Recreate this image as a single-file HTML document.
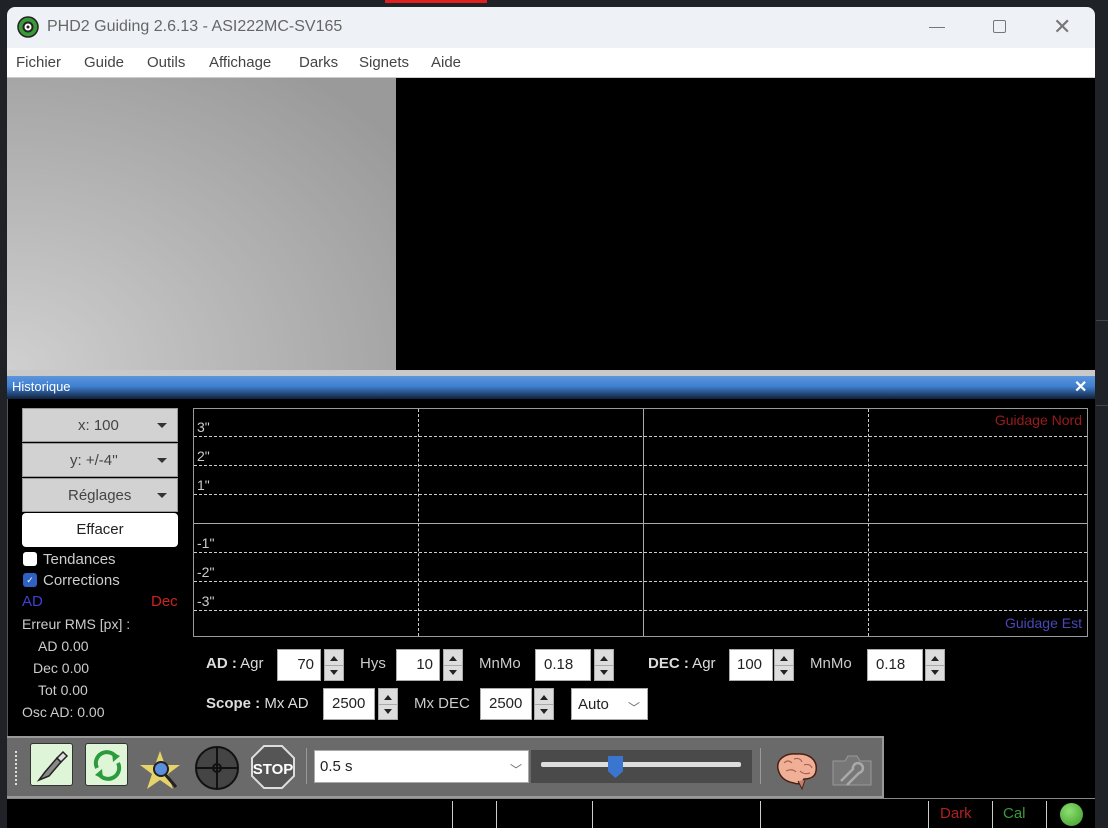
<!DOCTYPE html>
<html><head><meta charset="utf-8"><style>
*{margin:0;padding:0;box-sizing:border-box}
body{width:1108px;height:828px;background:#1f2327;position:relative;overflow:hidden;font-family:"Liberation Sans",sans-serif}
.abs{position:absolute}
.win{left:7px;top:7px;width:1088px;height:821px;background:#000;border-radius:8px 8px 0 0;overflow:hidden}
.title{left:0;top:0;width:1088px;height:41px;background:#eef1f6;color:#666;font-size:16px}
.menu{left:0;top:41px;width:1088px;height:29px;background:#fff;font-size:15px;color:#444}
.menu span{position:absolute;top:6px}
.lt{color:#ccc;font-size:14px}
.btn{background:#d2d2d2;color:#444;font-size:15px;border:1px solid #999}
.inp{background:#fff;color:#222;font-size:15px;border:1px solid #aaa}
.spin{background:#ddd;border:1px solid #aaa;width:20px;height:32px}
.spin:before{content:"";position:absolute;left:5px;top:6px;border:4px solid transparent;border-bottom:5px solid #222;border-top:0}
.spin:after{content:"";position:absolute;left:5px;top:20px;border:4px solid transparent;border-top:5px solid #222;border-bottom:0}
.spin i{position:absolute;left:0;top:15px;width:18px;height:1px;background:#aaa}
.hd{border-top:1px dashed #ccc;left:0;width:893px;height:0}
.vd{border-left:1px dashed #ccc;top:0;height:227px;width:0}
.gl{color:#ccc;font-size:14px;left:3px}
.sep{width:1px;background:#ccc;top:2px;height:28px}
</style></head><body>
<div class="abs" style="left:385px;top:0;width:102px;height:3px;background:#e02020"></div>
<div class="abs win">
 <div class="abs title">
  <svg class="abs" style="left:10px;top:9px" width="22" height="22"><circle cx="11" cy="11" r="10" fill="#3a9a3a" stroke="#222" stroke-width="1.5"/><circle cx="11" cy="11" r="4.5" fill="#fff" stroke="#222" stroke-width="2"/><circle cx="11" cy="11" r="1.5" fill="#222"/></svg>
  <span class="abs" style="left:40px;top:11px">PHD2 Guiding 2.6.13 - ASI222MC-SV165</span>
  <div class="abs" style="left:922px;top:20px;width:16px;height:1px;background:#777"></div>
  <div class="abs" style="left:986px;top:13px;width:13px;height:13px;border:1px solid #777;border-radius:2px"></div>
  <span class="abs" style="left:1046px;top:7px;font-size:22px;color:#777">✕</span>
 </div>
 <div class="abs menu"><span style="left:9px">Fichier</span><span style="left:77px">Guide</span><span style="left:140px">Outils</span><span style="left:202px">Affichage</span><span style="left:292px">Darks</span><span style="left:352px">Signets</span><span style="left:424px">Aide</span></div>
 <div class="abs" style="left:0;top:70px;width:1088px;height:1px;background:#ccc"></div>
 <div class="abs" style="left:0;top:71px;width:389px;height:292px;background:radial-gradient(ellipse at 0% 100%,#d0d0d0 0%,#b8b8b8 40%,#9a9a9a 90%)"></div>
 <div class="abs" style="left:0;top:363px;width:1088px;height:6px;background:#c9c9c9"></div>
 <div class="abs" style="left:0;top:369px;width:1088px;height:23px;background:linear-gradient(#5b95dc 0%,#3f7fd0 45%,#10213a 100%);color:#fff;font-size:13px"><span class="abs" style="left:5px;top:3px">Historique</span><span class="abs" style="left:1067px;top:1px;font-size:16px;font-weight:bold">✕</span></div>
 <div class="abs" style="left:0;top:392px;width:1088px;height:337px;background:#000;border-left:1px solid #555"></div>

 <div class="abs btn" style="left:15px;top:401px;width:156px;height:34px"><span class="abs" style="left:55px;top:8px">x: 100</span><span class="abs" style="left:134px;top:14px;border:5px solid transparent;border-top:5px solid #333"></span></div>
 <div class="abs btn" style="left:15px;top:436px;width:156px;height:34px"><span class="abs" style="left:47px;top:8px">y: +/-4''</span><span class="abs" style="left:134px;top:14px;border:5px solid transparent;border-top:5px solid #333"></span></div>
 <div class="abs btn" style="left:15px;top:471px;width:156px;height:34px"><span class="abs" style="left:45px;top:8px">Réglages</span><span class="abs" style="left:134px;top:14px;border:5px solid transparent;border-top:5px solid #333"></span></div>
 <div class="abs" style="left:15px;top:506px;width:156px;height:34px;background:#fff;border-radius:4px;font-size:15px;color:#222;text-align:center;line-height:33px">Effacer</div>
 <div class="abs" style="left:16px;top:545px;width:14px;height:14px;background:#fff;border-radius:3px"></div>
 <span class="abs lt" style="left:36px;top:544px;font-size:15px">Tendances</span>
 <div class="abs" style="left:16px;top:566px;width:14px;height:14px;background:#2e62c2;border-radius:3px;color:#fff;font-size:9px;text-align:center;line-height:14px">✓</div>
 <span class="abs lt" style="left:36px;top:565px;font-size:15px">Corrections</span>
 <span class="abs" style="left:15px;top:586px;color:#4040d8;font-size:15px">AD</span>
 <span class="abs" style="left:144px;top:586px;color:#d02020;font-size:15px">Dec</span>
 <span class="abs lt" style="left:15px;top:609px">Erreur RMS [px] :</span>
 <span class="abs lt" style="left:31px;top:631px">AD 0.00</span>
 <span class="abs lt" style="left:26px;top:653px">Dec 0.00</span>
 <span class="abs lt" style="left:31px;top:675px">Tot 0.00</span>
 <span class="abs lt" style="left:15px;top:697px">Osc AD: 0.00</span>

 <div class="abs" style="left:186px;top:401px;width:895px;height:229px;border:1px solid #999">
  <div class="abs hd" style="top:27px"></div><div class="abs hd" style="top:56px"></div><div class="abs hd" style="top:85px"></div>
  <div class="abs" style="left:0;top:114px;width:893px;height:1px;background:#aaa"></div>
  <div class="abs hd" style="top:143px"></div><div class="abs hd" style="top:172px"></div><div class="abs hd" style="top:201px"></div>
  <div class="abs vd" style="left:224px"></div><div class="abs" style="left:449px;top:0;width:1px;height:227px;background:#aaa"></div><div class="abs vd" style="left:674px"></div>
  <span class="abs gl" style="top:10px">3"</span><span class="abs gl" style="top:39px">2"</span><span class="abs gl" style="top:68px">1"</span>
  <span class="abs gl" style="top:126px">-1"</span><span class="abs gl" style="top:155px">-2"</span><span class="abs gl" style="top:184px">-3"</span>
  <span class="abs" style="right:5px;top:3px;color:#9a1c1c;font-size:14px">Guidage Nord</span>
  <span class="abs" style="right:5px;top:206px;color:#4848b8;font-size:14px">Guidage Est</span>
 </div>

 <span class="abs" style="left:199px;top:648px;color:#ddd;font-size:15px"><b>AD :</b> Agr</span>
 <div class="abs inp" style="left:270px;top:642px;width:44px;height:32px;text-align:right;padding:6px 6px 0 0">70</div><div class="abs spin" style="left:317px;top:642px"><i></i></div>
 <span class="abs lt" style="left:353px;top:648px;font-size:15px">Hys</span>
 <div class="abs inp" style="left:389px;top:642px;width:44px;height:32px;text-align:right;padding:6px 6px 0 0">10</div><div class="abs spin" style="left:436px;top:642px"><i></i></div>
 <span class="abs lt" style="left:472px;top:648px;font-size:15px">MnMo</span>
 <div class="abs inp" style="left:528px;top:642px;width:56px;height:32px;padding:6px 0 0 8px">0.18</div><div class="abs spin" style="left:587px;top:642px"><i></i></div>
 <span class="abs" style="left:641px;top:648px;color:#ddd;font-size:15px"><b>DEC :</b> Agr</span>
 <div class="abs inp" style="left:722px;top:642px;width:44px;height:32px;padding:6px 0 0 7px">100</div><div class="abs spin" style="left:767px;top:642px"><i></i></div>
 <span class="abs lt" style="left:803px;top:648px;font-size:15px">MnMo</span>
 <div class="abs inp" style="left:860px;top:642px;width:56px;height:32px;padding:6px 0 0 8px">0.18</div><div class="abs spin" style="left:918px;top:642px"><i></i></div>

 <span class="abs" style="left:199px;top:688px;color:#ddd;font-size:15px"><b>Scope :</b> Mx AD</span>
 <div class="abs inp" style="left:316px;top:681px;width:52px;height:32px;padding:6px 0 0 8px">2500</div><div class="abs spin" style="left:371px;top:681px"><i></i></div>
 <span class="abs lt" style="left:407px;top:688px;font-size:15px">Mx DEC</span>
 <div class="abs inp" style="left:473px;top:681px;width:52px;height:32px;padding:6px 0 0 8px">2500</div><div class="abs spin" style="left:527px;top:681px"><i></i></div>
 <div class="abs inp" style="left:564px;top:681px;width:77px;height:32px;padding:7px 0 0 6px">Auto<span class="abs" style="left:56px;top:10px;color:#666;font-size:12px">﹀</span></div>

 <div class="abs" style="left:0;top:729px;width:877px;height:62px;background:#6a6a6a;border:2px solid #999;border-left:0"></div>
 <div class="abs" style="left:8px;top:744px;width:2px;height:34px;border-left:2px dotted #ddd"></div>
 <div class="abs" style="left:23px;top:736px;width:43px;height:43px;background:#dff5d8;border:1px solid #333;border-radius:3px"><svg width="43" height="43"><path d="M8 36 L14 28 L26 14 L30 18 L18 32 Z" fill="#888" stroke="#222" stroke-width="1.5"/><path d="M26 14 L32 8 L36 12 L30 18 Z" fill="#ddd" stroke="#222" stroke-width="1.5"/></svg></div>
 <div class="abs" style="left:78px;top:736px;width:43px;height:43px;background:#dff5d8;border:1px solid #333;border-radius:3px"><svg width="43" height="43"><path d="M11 24 A11 11 0 0 1 30 13" fill="none" stroke="#2e9a3e" stroke-width="4"/><path d="M26 8 L34 12 L27 18 Z" fill="#2e9a3e"/><path d="M32 19 A11 11 0 0 1 13 30" fill="none" stroke="#2e9a3e" stroke-width="4"/><path d="M17 35 L9 31 L16 25 Z" fill="#2e9a3e"/></svg></div>
 <svg class="abs" style="left:133px;top:742px" width="46" height="46"><path d="M20 2 L25 16 L40 16 L28 25 L33 40 L20 31 L7 40 L12 25 L0 16 L15 16 Z" fill="#e6d36a"/><line x1="24" y1="24" x2="36" y2="38" stroke="#222" stroke-width="3"/><circle cx="21" cy="20" r="7" fill="#5a8fe0" stroke="#222" stroke-width="2"/></svg>
 <svg class="abs" style="left:186px;top:737px" width="48" height="48"><circle cx="24" cy="24" r="21" fill="#444" stroke="#111" stroke-width="2"/><line x1="3" y1="24" x2="45" y2="24" stroke="#111" stroke-width="2"/><line x1="24" y1="3" x2="24" y2="45" stroke="#111" stroke-width="2"/><circle cx="24" cy="24" r="4" fill="none" stroke="#111" stroke-width="2"/></svg>
 <svg class="abs" style="left:243px;top:737px" width="46" height="46"><polygon points="14,2 32,2 44,14 44,32 32,44 14,44 2,32 2,14" fill="#555" stroke="#ddd" stroke-width="2"/><text x="23" y="30" font-size="15" font-weight="bold" fill="#fff" text-anchor="middle" font-family="Liberation Sans">STOP</text></svg>
 <div class="abs" style="left:299px;top:741px;width:1px;height:36px;background:#999"></div>
 <div class="abs inp" style="left:307px;top:743px;width:215px;height:33px;padding:7px 0 0 5px">0.5 s<span class="abs" style="left:195px;top:10px;color:#666;font-size:12px">﹀</span></div>
 <div class="abs" style="left:524px;top:743px;width:221px;height:33px;background:#4a4a4a"></div>
 <div class="abs" style="left:534px;top:755px;width:200px;height:5px;background:#ddd;border-radius:2px"></div>
 <div class="abs" style="left:601px;top:749px;width:15px;height:22px;background:#3a76d0;clip-path:polygon(0 0,100% 0,100% 70%,50% 100%,0 70%)"></div>
 <div class="abs" style="left:753px;top:741px;width:1px;height:36px;background:#999"></div>
 <svg class="abs" style="left:767px;top:744px" width="46" height="40"><path d="M4 18 C2 8 12 2 22 3 C34 2 44 8 42 20 C41 27 34 28 30 28 C28 32 24 34 20 32 C14 31 6 28 4 18 Z" fill="#f0b098" stroke="#4a2010" stroke-width="1.5"/><path d="M10 12 Q14 8 18 12 M20 8 Q26 6 28 11 M30 14 Q36 12 38 17 M12 20 Q18 17 22 21 M26 20 Q30 24 36 22" fill="none" stroke="#b06050" stroke-width="1.2"/><path d="M24 30 L28 38 L31 29" fill="#c08070" stroke="#4a2010"/></svg>
 <svg class="abs" style="left:824px;top:746px" width="42" height="34"><path d="M2 8 L14 8 L17 3 L26 3 L29 8 L40 8 L40 32 L2 32 Z" fill="#777" stroke="#999"/><path d="M10 28 L22 16 A5 5 0 1 1 28 20 L16 32" fill="none" stroke="#aaa" stroke-width="2.5"/></svg>

 <div class="abs" style="left:0;top:791px;width:1088px;height:1px;background:#888"></div>
 <div class="abs" style="left:0;top:792px;width:1088px;height:29px">
  <div class="abs sep" style="left:445px"></div><div class="abs sep" style="left:489px"></div><div class="abs sep" style="left:585px"></div><div class="abs sep" style="left:753px"></div><div class="abs sep" style="left:921px"></div><div class="abs sep" style="left:985px"></div><div class="abs sep" style="left:1039px"></div>
  <span class="abs" style="left:933px;top:6px;color:#b02020;font-size:15px">Dark</span>
  <span class="abs" style="left:996px;top:6px;color:#3a9a3a;font-size:15px">Cal</span>
  <div class="abs" style="left:1053px;top:4px;width:23px;height:23px;border-radius:50%;background:radial-gradient(circle at 40% 35%,#8ee070,#3a9a2a)"></div>
 </div>
</div>
<div class="abs" style="left:1096px;top:320px;width:12px;height:1px;background:#444"></div>
<div class="abs" style="left:1096px;top:405px;width:12px;height:1px;background:#444"></div>
</body></html>
